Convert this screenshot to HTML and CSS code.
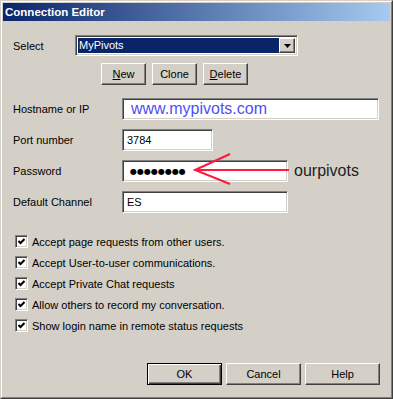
FILE: index.html
```html
<!DOCTYPE html>
<html lang="en">
<head>
    <meta charset="UTF-8">
    <meta name="viewport" content="width=device-width, initial-scale=1.0">
    <title>Connection Editor</title>
    <link rel="stylesheet" href="styles.css">
</head>
<body>
    <div class="window">
        <div class="frame">
            <div class="title-bar">Connection Editor</div>

            <div class="content">
                <div class="select-row">
                    <span class="label select-label">Select</span>
                    <div class="combo">
                        <span class="combo-value">MyPivots</span>
                        <span class="combo-button">
                            <svg width="7" height="4" viewBox="0 0 7 4"><polygon points="0,0 7,0 3.5,4" fill="#000"/></svg>
                        </span>
                    </div>
                </div>

                <div class="button-row">
                    <button class="btn small"><u>N</u>ew</button>
                    <button class="btn small">Clone</button>
                    <button class="btn small"><u>D</u>elete</button>
                </div>

                <div class="fields">
                    <label class="label">Hostname or IP</label>
                    <div class="field"><span class="input host">www.mypivots.com</span></div>

                    <label class="label">Port number</label>
                    <div class="field"><span class="input port">3784</span></div>

                    <label class="label">Password</label>
                    <div class="field password-field">
                        <span class="input pass"><span class="dots">●●●●●●●●</span></span>
                        <span class="note">ourpivots</span>
                        <svg class="arrow" width="100" height="34" viewBox="0 0 100 34">
                            <line x1="2" y1="17" x2="96" y2="17" stroke="#ff1a3c" stroke-width="2"/>
                            <polyline points="37,1 2,17 37,31" fill="none" stroke="#ff1a3c" stroke-width="2"/>
                        </svg>
                    </div>

                    <label class="label">Default Channel</label>
                    <div class="field"><span class="input channel">ES</span></div>
                </div>

                <div class="checks">
                    <div class="check"><span class="box"><svg width="7" height="7" viewBox="0 0 7 7"><polyline points="0.5,3 2.5,5 6.5,1" fill="none" stroke="#000" stroke-width="2"/></svg></span>Accept page requests from other users.</div>
                    <div class="check"><span class="box"><svg width="7" height="7" viewBox="0 0 7 7"><polyline points="0.5,3 2.5,5 6.5,1" fill="none" stroke="#000" stroke-width="2"/></svg></span>Accept User-to-user communications.</div>
                    <div class="check"><span class="box"><svg width="7" height="7" viewBox="0 0 7 7"><polyline points="0.5,3 2.5,5 6.5,1" fill="none" stroke="#000" stroke-width="2"/></svg></span>Accept Private Chat requests</div>
                    <div class="check"><span class="box"><svg width="7" height="7" viewBox="0 0 7 7"><polyline points="0.5,3 2.5,5 6.5,1" fill="none" stroke="#000" stroke-width="2"/></svg></span>Allow others to record my conversation.</div>
                    <div class="check"><span class="box"><svg width="7" height="7" viewBox="0 0 7 7"><polyline points="0.5,3 2.5,5 6.5,1" fill="none" stroke="#000" stroke-width="2"/></svg></span>Show login name in remote status requests</div>
                </div>

                <div class="dialog-buttons">
                    <button class="btn wide default">OK</button>
                    <button class="btn wide">Cancel</button>
                    <button class="btn wide">Help</button>
                </div>
            </div>
        </div>
    </div>
</body>
</html>
```

FILE: styles.css
```css
body {
    margin: 0;
    font-family: "Liberation Sans", Arial, sans-serif;
    font-size: 11px;
    color: #000;
    background: #d4d0c8;
}

.window {
    width: 393px;
    height: 399px;
    box-sizing: border-box;
    border-style: solid;
    border-width: 1px;
    border-color: #d4d0c8 #404040 #404040 #d4d0c8;
}

.frame {
    height: 100%;
    box-sizing: border-box;
    border-style: solid;
    border-width: 1px;
    border-color: #fff #808080 #808080 #fff;
    padding: 1px;
    display: flex;
    flex-direction: column;
}

.title-bar {
    height: 18px;
    line-height: 18px;
    padding-left: 2px;
    color: #fff;
    font-weight: bold;
    font-size: 11.5px;
    background: linear-gradient(to right, #0a246a, #a6caf0);
}

.content {
    flex: 1;
    display: flex;
    flex-direction: column;
    padding: 14px 10px 11px 10px;
}

.label {
    white-space: nowrap;
}

.select-row {
    display: flex;
    align-items: center;
    height: 21px;
}

.select-label {
    width: 62px;
}

.combo {
    width: 223px;
    height: 21px;
    box-sizing: border-box;
    border-style: solid;
    border-width: 1px;
    border-color: #808080 #fff #fff #808080;
    box-shadow: inset 1px 1px #404040, inset -1px -1px #d4d0c8;
    background: #fff;
    padding: 2px;
    display: flex;
}

.combo-value {
    flex: 1;
    background: #0a246a;
    color: #fff;
    line-height: 15px;
    padding-left: 1px;
}

.combo-button {
    width: 16px;
    box-sizing: border-box;
    background: #d4d0c8;
    border-style: solid;
    border-width: 1px;
    border-color: #fff #404040 #404040 #fff;
    box-shadow: inset -1px -1px #808080;
    display: flex;
    align-items: center;
    justify-content: center;
}

.button-row {
    display: flex;
    gap: 6px;
    margin-top: 7px;
    margin-left: 88px;
}

.btn {
    font-family: inherit;
    font-size: 11px;
    color: #000;
    height: 22px;
    padding: 0;
    background: #d4d0c8;
    border-style: solid;
    border-width: 1px;
    border-color: #fff #404040 #404040 #fff;
    box-shadow: inset -1px -1px #808080, inset 1px 1px #d4d0c8;
}

.btn.small {
    width: 45px;
}

.btn.wide {
    width: 75px;
}

.btn.default {
    border: 1px solid #000;
    box-shadow: inset 1px 1px #fff, inset -1px -1px #404040, inset -2px -2px #808080;
}

.fields {
    display: grid;
    grid-template-columns: 109px 1fr;
    grid-auto-rows: 22px;
    row-gap: 9px;
    align-items: center;
    margin-top: 13px;
}

.field {
    display: flex;
    align-items: center;
    height: 22px;
    position: relative;
}

.input {
    height: 22px;
    box-sizing: border-box;
    border-style: solid;
    border-width: 1px;
    border-color: #808080 #fff #fff #808080;
    box-shadow: inset 1px 1px #404040, inset -1px -1px #d4d0c8;
    background: #fff;
    padding: 0 4px;
    line-height: 20px;
}

.host {
    width: 257px;
    padding-left: 8px;
    color: #4f4ff5;
    font-size: 16px;
}

.port {
    width: 91px;
}

.pass,
.channel {
    width: 166px;
}

.dots {
    font-family: "DejaVu Sans", sans-serif;
    font-size: 8px;
    letter-spacing: 0;
    padding-left: 3px;
    position: relative;
    top: -1px;
}

.note {
    font-size: 16px;
    color: #222;
    margin-left: 6px;
}

.arrow {
    position: absolute;
    left: 71px;
    top: -7px;
}

.checks {
    margin-top: 18px;
    margin-left: 2px;
}

.check {
    display: flex;
    align-items: center;
    height: 21px;
}

.box {
    width: 13px;
    height: 13px;
    box-sizing: border-box;
    border-style: solid;
    border-width: 1px;
    border-color: #808080 #fff #fff #808080;
    box-shadow: inset 1px 1px #404040, inset -1px -1px #d4d0c8;
    background: #fff;
    display: flex;
    align-items: center;
    justify-content: center;
    margin-right: 4px;
}

.dialog-buttons {
    margin-top: auto;
    display: flex;
    justify-content: flex-end;
    gap: 4px;
}
```
